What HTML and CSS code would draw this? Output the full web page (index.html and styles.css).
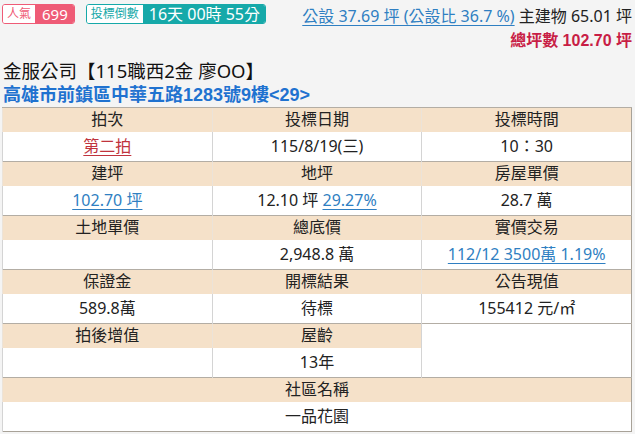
FILE: index.html
```html
<!DOCTYPE html>
<html lang="zh-Hant">
<head>
<meta charset="utf-8">
<link rel="stylesheet" href="styles.css">
</head>
<body>
<div class="page">
  <div class="top">
    <div class="badges">
      <span class="badge pink"><span class="lbl">人氣</span><span class="val">699</span></span>
      <span class="badge teal"><span class="lbl">投標倒數</span><span class="val">16天 00時 55分</span></span>
    </div>
    <div class="area">
      <div class="line1"><a class="link" href="#">公設 37.69 坪 (公設比 36.7 %)</a> 主建物 65.01 坪</div>
      <div class="total">總坪數 102.70 坪</div>
    </div>
  </div>
  <div class="title">金服公司【115職西2金 廖OO】</div>
  <div class="addr">高雄市前鎮區中華五路1283號9樓&lt;29&gt;</div>
  <table class="info">
    <colgroup><col><col><col></colgroup>
    <tr class="h"><th>拍次</th><th>投標日期</th><th>投標時間</th></tr>
    <tr class="v"><td><a class="red" href="#">第二拍</a></td><td>115/8/19(三)</td><td>10：30</td></tr>
    <tr class="h"><th>建坪</th><th>地坪</th><th>房屋單價</th></tr>
    <tr class="v"><td><a class="link" href="#">102.70 坪</a></td><td>12.10 坪 <a class="link" href="#">29.27%</a></td><td>28.7 萬</td></tr>
    <tr class="h"><th>土地單價</th><th>總底價</th><th>實價交易</th></tr>
    <tr class="v"><td></td><td>2,948.8 萬</td><td><a class="link" href="#">112/12 3500萬 1.19%</a></td></tr>
    <tr class="h"><th>保證金</th><th>開標結果</th><th>公告現值</th></tr>
    <tr class="v"><td>589.8萬</td><td>待標</td><td>155412 元/㎡</td></tr>
    <tr class="h"><th>拍後增值</th><th>屋齡</th><td class="blank" rowspan="2"></td></tr>
    <tr class="v"><td></td><td>13年</td></tr>
    <tr class="h"><th colspan="3">社區名稱</th></tr>
    <tr class="v"><td colspan="3">一品花園</td></tr>
  </table>
</div>
</body>
</html>
```
FILE: styles.css
```css
html, body {
  margin: 0;
  padding: 0;
  background: #f4f4f4;
}
body {
  font-family: "Noto Sans", "Noto Sans CJK TC", sans-serif;
  color: #222;
}
.page {
  width: 635px;
  height: 434px;
  overflow: hidden;
}
.top {
  display: flex;
  justify-content: space-between;
  padding: 4px 3px 0 2px;
  height: 48px;
  box-sizing: border-box;
}
.badges {
  display: flex;
  gap: 11px;
  align-items: flex-start;
  flex: none;
}
.badge {
  display: inline-flex;
  height: 20px;
  box-sizing: border-box;
  border-radius: 3px;
  align-items: stretch;
  white-space: nowrap;
}
.badge .lbl {
  background: #fff;
  font-size: 12px;
  line-height: 18px;
  padding: 0 4px;
  border-radius: 2px 0 0 2px;
}
.badge .val {
  color: #fff;
  line-height: 18px;
  border-radius: 0 2px 2px 0;
}
.pink { border: 1px solid #ef5b76; }
.pink .lbl { color: #ef5b76; }
.pink .val { background: #ef5b76; font-size: 15px; padding: 0 6px 0 7px; }
.teal { border: 1px solid #16a9a9; }
.teal .lbl { color: #16a9a9; }
.teal .val { background: #16a9a9; font-size: 16px; padding: 0 5px 0 6px; }
.area {
  text-align: right;
  white-space: nowrap;
}
.line1 {
  font-size: 16px;
  line-height: 22px;
  margin-top: 1px;
}
.link {
  color: #2f7fc2;
  text-decoration: underline;
  text-decoration-color: #2f7fc2;
  text-underline-offset: 3px;
}
.total {
  font-family: "Liberation Sans", "Noto Sans CJK TC", sans-serif;
  font-size: 16px;
  color: #c81d45;
  font-weight: bold;
  line-height: 22px;
  margin-top: 3px;
}
.title {
  font-size: 18.5px;
  line-height: 24px;
  padding-left: 3px;
  margin-top: 11px;
  color: #111;
}
.addr {
  font-family: "Liberation Sans", "Noto Sans CJK TC", sans-serif;
  font-weight: bold;
  font-size: 18px;
  line-height: 24px;
  padding-left: 3px;
  color: #1f72d0;
}
.info {
  margin: 0 0 0 2px;
  width: 630px;
  table-layout: fixed;
  border-collapse: collapse;
  border: 1px solid #a8a298;
  font-size: 16px;
  text-align: center;
  background: #fff;
}
.info th, .info td {
  padding: 0;
  font-weight: normal;
  color: #222;
  white-space: nowrap;
}
.info tr.h {
  height: 24px;
}
.info tr.h th {
  background: #f5e1c9;
  border-left: 1px solid #ece3d8;
  border-top: 1px solid #b3ada4;
  line-height: 23px;
}
.info tr.v {
  height: 30px;
}
.info tr.v td {
  border-left: 1px solid #d4d4d4;
  line-height: 29px;
}
.info td.blank {
  background: #fff;
  border-top: 1px solid #b3ada4;
  border-left: 1px solid #d4d4d4;
}
.red {
  color: #c0333d;
  text-decoration: underline;
  text-underline-offset: 3px;
}
```
